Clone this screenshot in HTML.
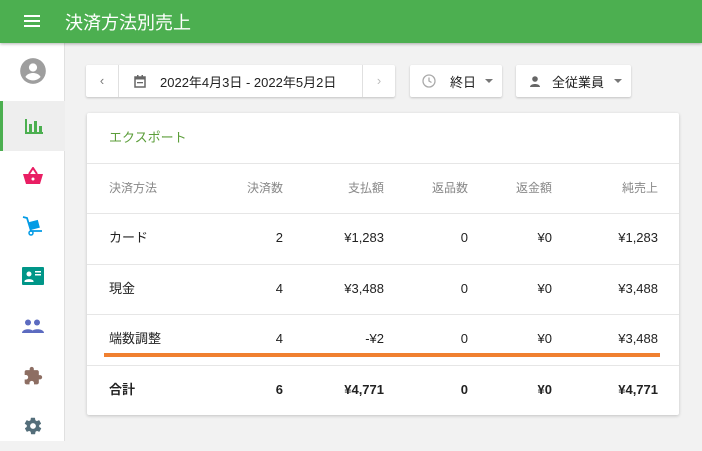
<!DOCTYPE html>
<html><head><meta charset="utf-8"><style>
*{box-sizing:border-box;margin:0;padding:0}
body{width:702px;height:441px;overflow:hidden;background:#f2f2f2;font-family:"Liberation Sans","Noto Sans CJK JP",sans-serif;font-size:13px;color:#222;position:relative}
.hdr{position:absolute;left:0;top:0;width:702px;height:43px;background:#4caf50;box-shadow:0 1px 3px rgba(0,0,0,.3);z-index:2}
.hdr .t{position:absolute;left:65px;top:9px;color:#fff;font-size:18px}
.side{position:absolute;left:0;top:43px;width:65px;height:398px;background:#fff;border-right:1px solid #e0e0e0}
.it{position:absolute;left:0;width:65px;height:50px;display:flex;align-items:center;justify-content:center}
.btn{position:absolute;top:65px;height:32px;background:#fff;box-shadow:0 1px 2px rgba(0,0,0,.2);border-radius:2px;display:flex;align-items:center}
.card{position:absolute;left:87px;top:113px;width:592px;height:302px;background:#fff;box-shadow:0 1px 3px rgba(0,0,0,.2);border-radius:2px}
.row{position:absolute;left:0;width:592px;height:50px;border-top:1px solid #e6e6e6}
.c{position:absolute;top:0;line-height:48px}
.r{text-align:right}
.h .c{color:#888;font-size:12px}
.b .c{font-weight:bold}
</style></head><body>
<div class="hdr">
<svg style="position:absolute;left:24px;top:15px" width="16" height="12"><rect y="0" width="16" height="2" fill="#fff"/><rect y="5" width="16" height="2" fill="#fff"/><rect y="10" width="16" height="2" fill="#fff"/></svg>
<div class="t">決済方法別売上</div></div>
<div class="side">
<div class="it" style="top:3px;height:50px"><svg width="28" height="28" viewBox="0 0 24 24"><circle cx="12" cy="12" r="11" fill="#9e9e9e"/><circle cx="12" cy="9" r="3.5" fill="#fff"/><path d="M5.5 17c1.5-2.5 4-3.3 6.5-3.3s5 .8 6.5 3.3c-1.7 2-4 3-6.5 3s-4.8-1-6.5-3z" fill="#fff"/></svg></div>
<div class="it" style="top:58px;background:#eee;border-left:3px solid #4caf50"><svg width="18" height="16"><rect x="0" y="1" width="2" height="15" fill="#4caf50"/><rect x="0" y="14" width="18" height="2" fill="#4caf50"/><rect x="4" y="6" width="3" height="9" fill="#4caf50"/><rect x="9" y="3" width="3" height="12" fill="#4caf50"/><rect x="14" y="8" width="3" height="7" fill="#4caf50"/></svg></div>
<div class="it" style="top:108px"><svg width="20" height="18" viewBox="0 0 20 18"><path d="M6 7L10 1l4 6" stroke="#e91e63" stroke-width="2" fill="none"/><path d="M0 7h20l-3 10H3z" fill="#e91e63"/><circle cx="10" cy="12" r="1.5" fill="#fff"/></svg></div>
<div class="it" style="top:158px"><svg width="22" height="20" viewBox="0 0 22 20"><path d="M1 1l4 1 4 13h11" stroke="#039be5" stroke-width="1.8" fill="none"/><rect x="8" y="5" width="9" height="8" fill="#039be5" transform="rotate(-15 12 9)"/><circle cx="9" cy="17" r="2" stroke="#039be5" stroke-width="1.5" fill="none"/></svg></div>
<div class="it" style="top:208px"><svg width="22" height="18"><rect width="22" height="18" rx="1" fill="#009688"/><circle cx="7" cy="7" r="2.5" fill="#fff"/><path d="M2.5 14c1-2.5 8-2.5 9 0v1h-9z" fill="#fff"/><rect x="13" y="4" width="6" height="1.5" fill="#fff"/><rect x="13" y="7" width="6" height="1.5" fill="#fff"/></svg></div>
<div class="it" style="top:258px"><svg width="22" height="14"><circle cx="6" cy="3.5" r="3" fill="#5c6bc0"/><circle cx="15" cy="3.5" r="3" fill="#5c6bc0"/><path d="M0 14c0-5 12-5 12 0z" fill="#5c6bc0"/><path d="M9 14c0-5 13-5 13 0z" fill="#5c6bc0"/></svg></div>
<div class="it" style="top:308px"><svg width="20" height="20" viewBox="0 0 24 24"><path d="M20.5 11H19V7c0-1.1-.9-2-2-2h-4V3.5a2.5 2.5 0 0 0-5 0V5H4c-1.1 0-2 .9-2 2v3.8h1.5c1.5 0 2.7 1.2 2.7 2.7S5 16.2 3.5 16.2H2V20c0 1.1.9 2 2 2h3.8v-1.5c0-1.5 1.2-2.7 2.7-2.7s2.7 1.2 2.7 2.7V22H17c1.1 0 2-.9 2-2v-4h1.5a2.5 2.5 0 0 0 0-5z" fill="#8d6e63"/></svg></div>
<div class="it" style="top:358px"><svg width="20" height="20" viewBox="0 0 24 24"><path d="M19.4 13c.04-.3.1-.6.1-1s-.03-.7-.1-1l2.1-1.6c.2-.2.2-.4.1-.6l-2-3.5c-.1-.2-.4-.3-.6-.2l-2.5 1c-.5-.4-1.1-.7-1.7-1l-.4-2.6c0-.2-.2-.4-.5-.4h-4c-.3 0-.5.2-.5.4l-.4 2.6c-.6.3-1.2.6-1.7 1l-2.5-1c-.2-.1-.5 0-.6.2l-2 3.5c-.1.2-.1.5.1.6L4.6 11c0 .3-.1.6-.1 1s0 .7.1 1l-2.1 1.6c-.2.2-.2.4-.1.6l2 3.5c.1.2.4.3.6.2l2.5-1c.5.4 1.1.7 1.7 1l.4 2.6c0 .2.2.4.5.4h4c.3 0 .5-.2.5-.4l.4-2.6c.6-.3 1.2-.6 1.7-1l2.5 1c.2.1.5 0 .6-.2l2-3.5c.1-.2.1-.5-.1-.6zM12 15.5a3.5 3.5 0 1 1 0-7 3.5 3.5 0 0 1 0 7z" fill="#546e7a"/></svg></div>
</div>

<div class="btn" style="left:86px;width:309px">
<div style="width:33px;height:32px;border-right:1px solid #e0e0e0;text-align:center;line-height:32px;color:#777">‹</div>
<svg style="margin-left:15px" width="12" height="13" viewBox="0 0 12 13"><rect x="1" y="2" width="10" height="10" fill="none" stroke="#666" stroke-width="1.5"/><rect x="1" y="2" width="10" height="2.5" fill="#666"/><rect x="3" y="0" width="1.5" height="3" fill="#666"/><rect x="7.5" y="0" width="1.5" height="3" fill="#666"/><rect x="3" y="7" width="6" height="1.3" fill="#666"/></svg>
<span style="margin-left:14px;font-size:13px">2022年4月3日 - 2022年5月2日</span>
<div style="position:absolute;right:0;top:0;width:33px;height:32px;border-left:1px solid #e0e0e0;text-align:center;line-height:32px;color:#bbb">›</div>
</div>
<div class="btn" style="left:410px;width:92px">
<svg style="margin-left:12px" width="14" height="14"><circle cx="7" cy="7" r="6" fill="none" stroke="#aaa" stroke-width="1.3"/><path d="M7 3.5V7l2.5 1.5" stroke="#aaa" stroke-width="1.3" fill="none"/></svg>
<span style="margin-left:14px">終日</span>
<span style="margin-left:9px;border-left:4px solid transparent;border-right:4px solid transparent;border-top:4px solid #777;width:0;height:0"></span>
</div>
<div class="btn" style="left:516px;width:115px">
<svg style="margin-left:14px" width="10" height="11"><circle cx="5" cy="3" r="2.8" fill="#666"/><path d="M0 11c0-4 10-4 10 0z" fill="#666"/></svg>
<span style="margin-left:12px">全従業員</span>
<span style="margin-left:10px;border-left:4px solid transparent;border-right:4px solid transparent;border-top:4px solid #777;width:0;height:0"></span>
</div>

<div class="card">
<div style="position:absolute;left:22px;top:14px;color:#5c9e3a;font-size:13px">エクスポート</div>
<div class="row h" style="top:50px"><span class="c" style="left:22px">決済方法</span><span class="c r" style="right:396px">決済数</span><span class="c r" style="right:295px">支払額</span><span class="c r" style="right:211px">返品数</span><span class="c r" style="right:127px">返金額</span><span class="c r" style="right:21px">純売上</span></div>
<div class="row" style="top:100px"><span class="c" style="left:22px">カード</span><span class="c r" style="right:396px">2</span><span class="c r" style="right:295px">¥1,283</span><span class="c r" style="right:211px">0</span><span class="c r" style="right:127px">¥0</span><span class="c r" style="right:21px">¥1,283</span></div>
<div class="row" style="top:151px"><span class="c" style="left:22px">現金</span><span class="c r" style="right:396px">4</span><span class="c r" style="right:295px">¥3,488</span><span class="c r" style="right:211px">0</span><span class="c r" style="right:127px">¥0</span><span class="c r" style="right:21px">¥3,488</span></div>
<div class="row" style="top:201px"><span class="c" style="left:22px">端数調整</span><span class="c r" style="right:396px">4</span><span class="c r" style="right:295px">-¥2</span><span class="c r" style="right:211px">0</span><span class="c r" style="right:127px">¥0</span><span class="c r" style="right:21px">¥3,488</span></div>
<div class="row b" style="top:252px"><span class="c" style="left:22px">合計</span><span class="c r" style="right:396px">6</span><span class="c r" style="right:295px">¥4,771</span><span class="c r" style="right:211px">0</span><span class="c r" style="right:127px">¥0</span><span class="c r" style="right:21px">¥4,771</span></div>
</div>
<div style="position:absolute;left:104px;top:353px;width:556px;height:4px;background:#f08030"></div>
</body></html>
